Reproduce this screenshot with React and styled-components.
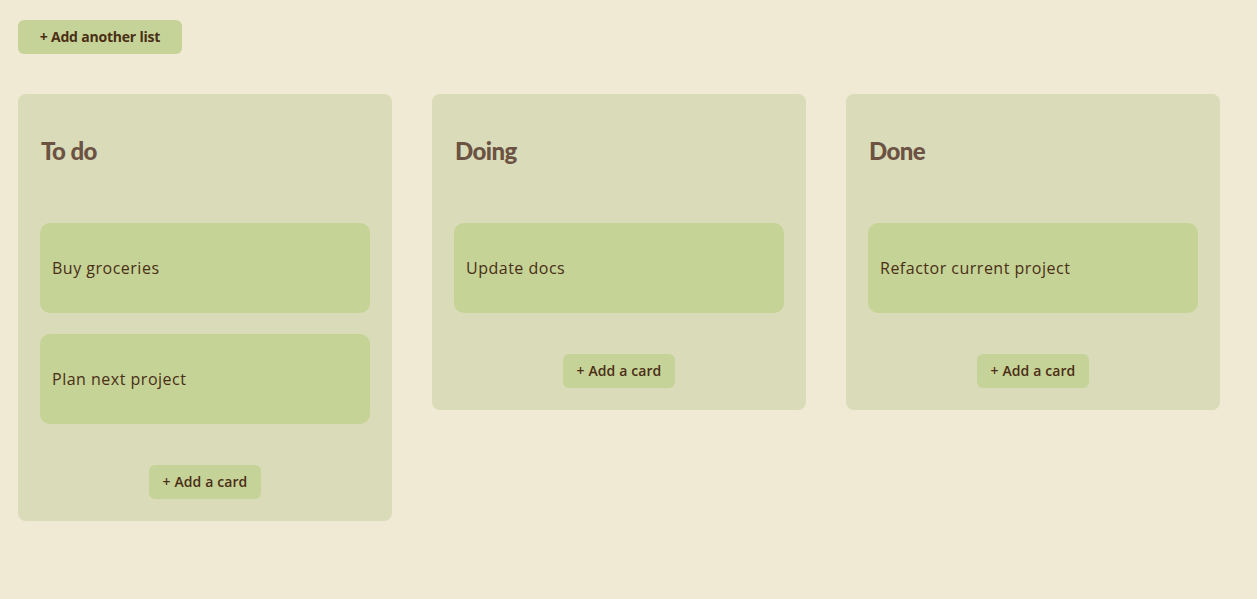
import React from 'react'
import styled, { createGlobalStyle } from 'styled-components'

const GlobalStyle = createGlobalStyle`
  body {
    margin: 0;
    background: #f0e9d3;
    font-family: 'Open Sans', 'Liberation Sans', sans-serif;
    color: #4a2e16;
  }
`

const Page = styled.div`
  padding: 20px 18px;
  min-height: 599px;
  box-sizing: border-box;
`

const AddListButton = styled.button`
  display: block;
  width: 164px;
  height: 34px;
  padding: 0 0 1px;
  border: none;
  border-radius: 6px;
  background: #c6d398;
  color: #4a2e16;
  font-family: inherit;
  font-size: 14px;
  font-weight: 700;
  letter-spacing: -0.2px;
  cursor: pointer;
`

const Board = styled.div`
  display: flex;
  align-items: flex-start;
  gap: 40px;
  margin-top: 40px;
`

const Column = styled.div`
  width: 374px;
  box-sizing: border-box;
  padding: 22px;
  border-radius: 8px;
  background: #dadbb8;
  display: flex;
  flex-direction: column;
`

const ColumnTitle = styled.h2`
  margin: 20px 0 58px 1px;
  font-family: 'Lato', 'Open Sans', sans-serif;
  font-size: 24px;
  font-weight: 900;
  line-height: 29px;
  color: #6b5243;
  letter-spacing: -0.6px;
`

const CardList = styled.div`
  display: flex;
  flex-direction: column;
  gap: 21px;
`

const Card = styled.div`
  height: 90px;
  display: flex;
  align-items: center;
  padding: 0 12px;
  border-radius: 10px;
  background: #c5d396;
  font-size: 16px;
  letter-spacing: 0.5px;
`

const AddCardButton = styled.button`
  align-self: center;
  margin-top: 41px;
  height: 34px;
  padding: 0 14px 2px;
  border: none;
  border-radius: 6px;
  background: #c6d398;
  color: #4a2e16;
  font-family: inherit;
  font-size: 14px;
  font-weight: 600;
  letter-spacing: 0.1px;
  cursor: pointer;
`

const lists = [
  { title: 'To do', cards: ['Buy groceries', 'Plan next project'] },
  { title: 'Doing', cards: ['Update docs'] },
  { title: 'Done', cards: ['Refactor current project'] },
]

export default function App() {
  return (
    <Page>
      <GlobalStyle />
      <AddListButton>+ Add another list</AddListButton>
      <Board>
        {lists.map(list => (
          <Column key={list.title}>
            <ColumnTitle>{list.title}</ColumnTitle>
            <CardList>
              {list.cards.map(card => (
                <Card key={card}>{card}</Card>
              ))}
            </CardList>
            <AddCardButton>+ Add a card</AddCardButton>
          </Column>
        ))}
      </Board>
    </Page>
  )
}
